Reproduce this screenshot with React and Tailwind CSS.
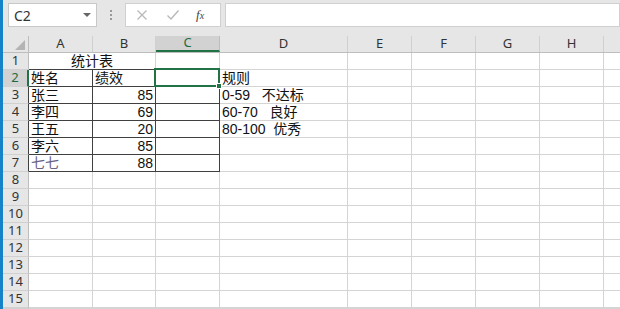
import React from "react";

const cols = [
  { k: "A", w: "w-[64px]" },
  { k: "B", w: "w-[63px]" },
  { k: "C", w: "w-[64px]" },
  { k: "D", w: "w-[128px]" },
  { k: "E", w: "w-[64px]" },
  { k: "F", w: "w-[64px]" },
  { k: "G", w: "w-[64px]" },
  { k: "H", w: "w-[64px]" },
  { k: "", w: "w-[64px]" },
];

const rows = [
  null,
  ["姓名", "绩效", "", "规则"],
  ["张三", "85", "", "0-59   不达标"],
  ["李四", "69", "", "60-70   良好"],
  ["王五", "20", "", "80-100  优秀"],
  ["李六", "85", "", ""],
  ["七七", "88", "", ""],
];

const cellFont = { fontFamily: '"Liberation Sans", "Noto Sans CJK SC", sans-serif' };
const uiFont = { fontFamily: '"Noto Sans", "Liberation Sans", sans-serif' };

const Toolbar = () => (
  <div className="flex items-center h-[36px] pb-[9px] pt-[3px] pl-[5px] bg-[#e6e6e6]">
    <div className="flex items-center justify-between w-[89px] h-[24px] bg-white border border-[#c8c8c8] pl-[5px] pr-[5px]">
      <span className="text-[14px] text-[#333]" style={uiFont}>C2</span>
      <span className="w-0 h-0 border-l-[4px] border-r-[4px] border-t-[4px] border-l-transparent border-r-transparent border-t-[#666]" />
    </div>
    <div className="w-[28px] flex justify-center">
      <div className="flex flex-col gap-[2px]">
        <span className="w-[2px] h-[2px] bg-[#999]" />
        <span className="w-[2px] h-[2px] bg-[#999]" />
        <span className="w-[2px] h-[2px] bg-[#999]" />
      </div>
    </div>
    <div className="flex items-center w-[96px] h-[24px] bg-white border border-[#d0d0d0]">
      <svg width="12" height="12" viewBox="0 0 12 12" className="ml-[10px]">
        <path d="M1.5 1.5 L10.5 10.5 M10.5 1.5 L1.5 10.5" stroke="#b8b8b8" strokeWidth="1.3" />
      </svg>
      <svg width="14" height="12" viewBox="0 0 14 12" className="ml-[18px]">
        <path d="M1.5 6.5 L5 10 L12.5 1.5" stroke="#b8b8b8" strokeWidth="1.4" fill="none" />
      </svg>
      <span className="ml-[16px] text-[13px] italic text-[#444]" style={{ fontFamily: '"Liberation Serif", serif' }}>
        f<span className="text-[10px]">x</span>
      </span>
    </div>
    <div className="ml-[4px] flex-1 h-[24px] bg-white border border-[#d0d0d0]" />
  </div>
);

const HeaderRow = () => (
  <div className="flex h-[17px] bg-[#e6e6e6] border-b border-[#bdbdbd]">
    <div className="relative w-[26px] shrink-0 border-r border-[#bdbdbd]">
      <svg width="10" height="10" viewBox="0 0 10 10" className="absolute right-[3px] bottom-[2px]">
        <polygon points="10,0 10,10 0,10" fill="#b4b4b4" />
      </svg>
    </div>
    {cols.map((c, i) => (
      <div
        key={i}
        className={`${c.w} shrink-0 flex items-center justify-center text-[13px] ${
          c.k === "C"
            ? "bg-[#d2d2d2] text-[#1e6b41] border-b-2 border-b-[#217346] border-r border-r-[#bdbdbd]"
            : "text-[#333] border-r border-[#d0d0d0]"
        }`}
        style={uiFont}
      >
        {c.k}
      </div>
    ))}
  </div>
);

const Row = ({ n }) => {
  const data = rows[n - 1];
  const inTable = n >= 2 && n <= 7;
  const selected = n === 2;
  return (
    <div className="flex h-[17px]">
      <div
        className={`w-[26px] shrink-0 flex items-center justify-center text-[13px] border-b border-[#d0d0d0] ${
          selected
            ? "bg-[#d2d2d2] text-[#1e6b41] border-r-2 border-r-[#217346]"
            : inTable
            ? "bg-[#e6e6e6] text-[#333] border-r border-r-[#404040]"
            : "bg-[#e6e6e6] text-[#333] border-r border-r-[#bdbdbd]"
        }`}
        style={uiFont}
      >
        {n <= 15 ? n : ""}
      </div>
      {n === 1 ? (
        <>
          <div className="w-[127px] shrink-0 flex items-center justify-center text-[14px] text-[#111] border-b border-b-[#404040] border-r border-r-[#d4d4d4]" style={cellFont}>
            统计表
          </div>
          {cols.slice(2).map((c, i) => (
            <div
              key={i}
              className={`${c.w} shrink-0 border-r border-r-[#d4d4d4] border-b ${c.k === "C" ? "border-b-[#404040]" : "border-b-[#d4d4d4]"}`}
            />
          ))}
        </>
      ) : (
        cols.map((c, i) => {
          const v = data ? data[i] : "";
          const dark = inTable && i < 3;
          const isNum = i === 1 && n > 2;
          return (
            <div
              key={i}
              className={`relative ${c.w} shrink-0 flex items-center whitespace-pre text-[14px] leading-none border-r border-b ${
                dark ? "border-[#404040]" : "border-[#d4d4d4]"
              } ${isNum ? "justify-end pr-[2px]" : "pl-[2px]"} ${
                n === 7 && i === 0 ? "text-[#6a6288]" : "text-[#111]"
              }`}
              style={cellFont}
            >
              {v}
              {selected && c.k === "C" && (
                <div className="absolute -left-[2px] -top-[2px] -right-[1px] -bottom-[1px] border-2 border-[#217346] z-10">
                  <span className="absolute -right-[4px] -bottom-[4px] w-[6px] h-[6px] bg-[#217346] border border-white" />
                </div>
              )}
            </div>
          );
        })
      )}
    </div>
  );
};

export default function App() {
  return (
    <div className="flex w-[620px] h-[309px] overflow-hidden bg-white">
      <div className="w-[3px] shrink-0 bg-[#1683c9]" />
      <div className="flex-1 flex flex-col overflow-hidden">
        <Toolbar />
        <HeaderRow />
        {Array.from({ length: 16 }, (_, i) => (
          <Row key={i} n={i + 1} />
        ))}
      </div>
    </div>
  );
}
